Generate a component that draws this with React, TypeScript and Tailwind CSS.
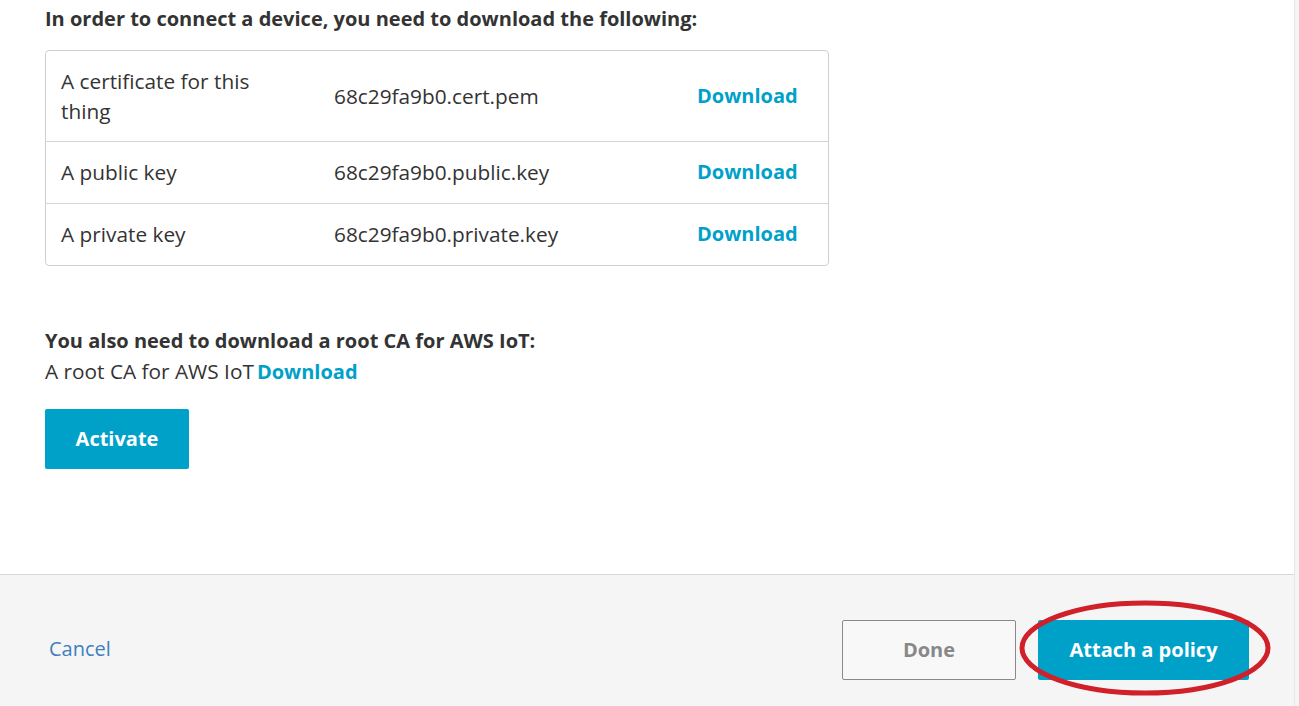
import React from "react";

const files = [
  { label: "A certificate for this thing", file: "68c29fa9b0.cert.pem" },
  { label: "A public key", file: "68c29fa9b0.public.key" },
  { label: "A private key", file: "68c29fa9b0.private.key" },
];

const linkCls = "font-bold text-[20px] text-[#00a1c9]";

export default function App() {
  return (
    <div className="relative flex h-[706px] w-[1299px] overflow-hidden bg-[#f5f5f5] text-[#333] [font-family:'Open_Sans',sans-serif]">
      <div className="flex w-[1295px] flex-col border-r border-[#e6e6e6]">
        {/* contenu */}
        <div className="h-[574px] bg-white px-[45px] pt-[4px]">
          <h2 className="text-[20px] font-bold leading-[30px]">In order to connect a device, you need to download the following:</h2>

          <div className="mt-[16px] w-[784px] rounded-[4px] border border-[#cfcfcf]">
            {files.map((f, i) => (
              <div key={f.file} className={`flex items-center text-[20.8px] leading-[30px] ${i > 0 ? "border-t border-[#d5d5d5] pb-[16px] pt-[15px]" : "py-[15px]"}`}>
                <div className="w-[288px] pl-[15px]">
                  <div className="w-[225px]">{f.label}</div>
                </div>
                <div className="w-[363px]">{f.file}</div>
                <a className={linkCls}>Download</a>
              </div>
            ))}
          </div>

          <h3 className="mt-[60px] text-[20px] font-bold leading-[30px]">You also need to download a root CA for AWS IoT:</h3>
          <p className="text-[20.8px] leading-[30px]">
            A root CA for AWS IoT<a className={`${linkCls} ml-[3px]`}>Download</a>
          </p>

          <button className="mt-[22px] h-[60px] w-[144px] rounded-[2px] bg-[#00a1c9] text-[20px] font-bold text-white">Activate</button>
        </div>

        {/* pied */}
        <div className="flex flex-1 items-start border-t border-[#d9d9d9] bg-[#f5f5f5] pl-[49px] pr-[45px] pt-[45px]">
          <a className="mt-[14px] text-[20px] leading-[30px] text-[#3f7fbf]">Cancel</a>
          <div className="ml-auto flex gap-[22px]">
            <button className="h-[60px] w-[174px] rounded-[2px] border border-[#8a8a8a] bg-[#f8f8f8] text-[20px] font-bold text-[#888]">Done</button>
            <button className="h-[60px] w-[211px] rounded-[2px] bg-[#00a1c9] text-[20px] font-bold text-white">Attach a policy</button>
          </div>
        </div>
      </div>

      {/* annotation rouge */}
      <svg className="pointer-events-none absolute left-[1018px] top-[599px]" width="254" height="98" viewBox="0 0 254 98">
        <ellipse cx="127" cy="49" rx="123" ry="45" fill="none" stroke="#d0202a" strokeWidth="5" />
      </svg>
    </div>
  );
}
